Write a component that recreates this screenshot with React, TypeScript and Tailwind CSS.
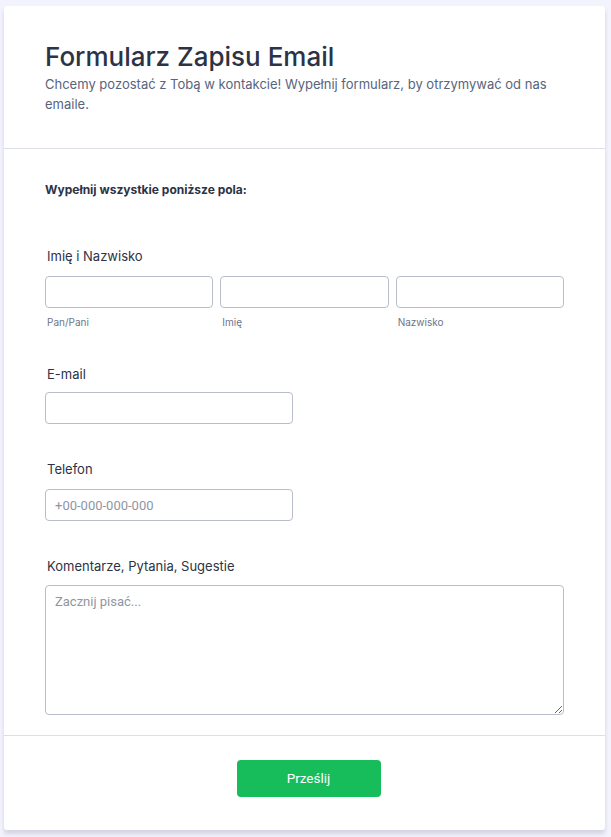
import React from "react";

const font = { fontFamily: "Inter, 'Noto Sans', sans-serif" };
const roboto = { fontFamily: "Roboto, 'Liberation Sans', sans-serif" };

const inputCls =
  "h-[32px] w-full rounded-[4px] border border-[#b8bdc9] bg-white px-[9px] text-[13px] text-[#2c3345] placeholder:text-[#8f96a3] outline-none";

const App = () => {
  return (
    <div className="min-h-[837px] bg-[#f3f3fe] pt-[6px] pl-[4px] pr-[6px] pb-[7px]" style={font}>
      <div className="rounded-[3px] bg-white shadow-[0_4px_4px_rgba(87,100,126,0.21)]">
        <div className="border-b border-[#dcdfe8] px-[41px] pt-[35px] pb-[34px]">
          <h1 className="text-[26px] font-medium leading-[32px] text-[#2c3345]">
            Formularz Zapisu Email
          </h1>
          <p className="mt-[1px] text-[13px] leading-[20px] text-[#57647e]">
            Chcemy pozostać z Tobą w kontakcie! Wypełnij formularz, by otrzymywać od nas emaile.
          </p>
        </div>

        <div className="px-[41px] pt-[33px] pb-[20px]">
          <p className="text-[12px] font-bold leading-[16px] text-[#2c3345]">
            Wypełnij wszystkie poniższe pola:
          </p>

          <div className="mt-[49px]">
            <label className="block pl-[2px] text-[13px] leading-[18px] text-[#2c3345]">
              Imię i Nazwisko
            </label>
            <div className="mt-[11px] grid grid-cols-3 gap-[7px]">
              {["Pan/Pani", "Imię", "Nazwisko"].map((s) => (
                <div key={s}>
                  <input className={inputCls} style={roboto} />
                  <span className="mt-[8px] block pl-[2px] text-[10px] leading-[12px] text-[#6c7589]">
                    {s}
                  </span>
                </div>
              ))}
            </div>
          </div>

          <div className="mt-[37px]">
            <label className="block pl-[2px] text-[13px] leading-[18px] text-[#2c3345]">E-mail</label>
            <input className={inputCls + " mt-[9px] !w-[248px]"} style={roboto} />
          </div>

          <div className="mt-[36px]">
            <label className="block pl-[2px] text-[13px] leading-[18px] text-[#2c3345]">Telefon</label>
            <input
              className={inputCls + " mt-[11px] !w-[248px]"}
              style={roboto}
              placeholder="+00-000-000-000"
            />
          </div>

          <div className="mt-[36px]">
            <label className="block pl-[2px] text-[13px] leading-[18px] text-[#2c3345]">
              Komentarze, Pytania, Sugestie
            </label>
            <textarea
              className="mt-[10px] block h-[130px] w-full rounded-[4px] border border-[#b8bdc9] bg-white px-[9px] py-[6px] text-[13px] leading-[20px] text-[#2c3345] placeholder:text-[#8f96a3] outline-none"
              style={roboto}
              placeholder="Zacznij pisać..."
            />
          </div>
        </div>

        <div className="flex justify-center border-t border-[#dcdfe8] pt-[24px] pb-[33px]">
          <button
            className="ml-[8px] h-[37px] w-[144px] rounded-[4px] bg-[#18bd5b] text-[13.5px] text-white"
            style={roboto}
          >
            Prześlij
          </button>
        </div>
      </div>
    </div>
  );
};

export default App;
